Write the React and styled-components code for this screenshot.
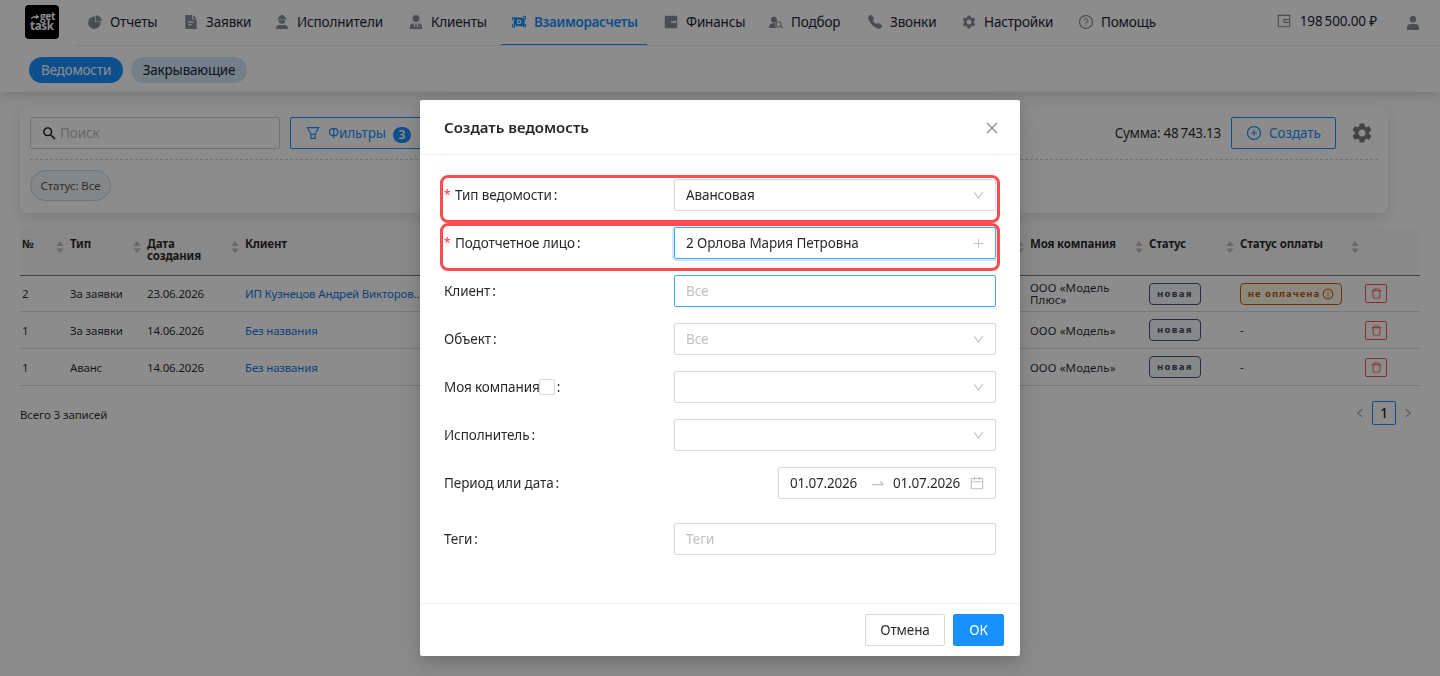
import React from "react";
import styled, { createGlobalStyle, css } from "styled-components";
import {
    AiFillPieChart,
    AiFillWallet,
    AiOutlineCalendar,
    AiOutlineClose,
    AiOutlineDelete,
    AiOutlineDown,
    AiOutlineInfoCircle,
    AiOutlineLeft,
    AiOutlinePlus,
    AiOutlinePlusCircle,
    AiOutlineQuestionCircle,
    AiOutlineRight,
    AiOutlineSwapRight,
    AiOutlineWallet,
} from "react-icons/ai";
import { BsTelephoneFill } from "react-icons/bs";
import { MdSearch, MdSettings } from "react-icons/md";

const GlobalStyle = createGlobalStyle`
    * {
        box-sizing: border-box;
    }

    body {
        margin: 0;
        height: 676px;
        overflow: hidden;
        background: #ffffff;
        color: rgba(0, 0, 0, 0.85);
        font-family: "Noto Sans", "Open Sans", sans-serif;
        font-size: 13.5px;
        line-height: 22px;
        letter-spacing: -0.1px;
    }
`;

/* ---------- icons ---------- */

const DocIcon = () => (
    <svg viewBox="-1 -1 16 16" fill="currentColor">
        <path
            fillRule="evenodd"
            d="M1.2 0H8v4.300h4.600V14H1.200zM4 6.600v1.100h5.800v-1.100zM4 9.200v1.100h3.800v-1.100z"
        />
        <path d="M9 0l3.600 3.400H9z" />
    </svg>
);

const WorkerIcon = () => (
    <svg viewBox="-1 -1 16 16" fill="currentColor">
        <path d="M3.200 3.600C3.300 1.900 4.400.9 5.800.7V0h2.400v.7c1.400.2 2.500 1.200 2.600 2.900h.7v1h-9v-1z" />
        <path d="M3.600 5.300h6.800a3.400 3.400 0 0 1-6.800 0z" />
        <path d="M1 14c0-2.900 1.300-4 3.400-4h5.200c2.100 0 3.400 1.100 3.400 4z" />
    </svg>
);

const ClientIcon = () => (
    <svg viewBox="-1 -1 16 16" fill="currentColor">
        <circle cx="7" cy="3.5" r="3.5" />
        <path
            fillRule="evenodd"
            d="M1 14v-2.100c0-2.200 1.300-3.400 3.200-3.600L5.600 13l.8-3-.6-1.600h2.400L7.600 10l.8 3 1.400-4.700c1.900.2 3.200 1.400 3.200 3.600V14zM9.600 11.400v.8h1.900v-.8z"
        />
    </svg>
);

const MoneyIcon = () => (
    <svg viewBox="-1 -1 16 16" fill="currentColor">
        <path
            fillRule="evenodd"
            d="M1.800 2.600h8.700v1h1V3h1.200v8.200H4.200v-.9h-1v.9H1.800zM7 4.600a2.300 2.300 0 1 0 0 4.600 2.300 2.300 0 0 0 0-4.600z"
        />
        <circle cx="7" cy="6.9" r="1.1" />
        <path d="M0 2.300h3v1H1v2H0zM10.800 1.400l1.200-1.400v.9h2v3.300h-1V1.900h-1v.9zM0 9h1v2.400h1v-.9l1.400 1.400L2 13.300v-.9H0zM11 11.300h2V9h1v3.300h-3z" />
    </svg>
);

const PickIcon = () => (
    <svg viewBox="-1 -1 16 16" fill="currentColor">
        <circle cx="4.9" cy="4.7" r="3" />
        <path d="M0 13c0-3.200 1.400-4.800 3.800-4.800h2.900a3.700 3.700 0 0 0 1.300 4.800z" />
        <g fill="none" stroke="currentColor" strokeWidth="1.1">
            <circle cx="9.6" cy="9.2" r="2.5" />
            <path d="M11.400 11l2.300 2.300" />
        </g>
    </svg>
);

const UserIcon = () => (
    <svg viewBox="-1 -1 16 16" fill="currentColor">
        <circle cx="7" cy="3.3" r="3.2" />
        <path d="M1 14v-2.600C1 9.100 2.600 8 4.600 8h4.800c2 0 3.600 1.100 3.600 3.400V14z" />
    </svg>
);

const FunnelIcon = () => (
    <svg
        viewBox="-1 -1 16 16"
        fill="none"
        stroke="currentColor"
        strokeWidth="1.1"
    >
        <path d="M1.300 1.600h11.400L9.200 7.800v4.600H4.800V7.800z" />
        <path d="M4.800 8.300h4.400" />
    </svg>
);

const LogoArrow = () => (
    <svg width="10" height="6" viewBox="0 0 10 6" fill="#fff">
        <path d="M.5 5.500C.7 3.300 2.500 2 6 2V.4L9.500 3 6 5.300V3.700C3.500 3.600 1.700 4 .5 5.500z" />
    </svg>
);

/* ---------- header ---------- */

const Header = styled.header`
    height: 92px;
    background: #ffffff;
    box-shadow: 0 2px 12px rgba(0, 0, 0, 0.2);
`;

const TopBar = styled.div`
    display: flex;
    height: 46px;
    padding-left: 25px;
`;

const Logo = styled.div`
    display: flex;
    flex-direction: column;
    width: 34px;
    height: 34px;
    margin: 5px 18px 0 0;
    padding: 7px 0 0 5px;
    border-radius: 4px;
    background: #000000;
    color: #ffffff;
    font: 700 10px/9px "Open Sans", sans-serif;
    letter-spacing: -0.3px;

    span {
        display: flex;
        align-items: center;
        height: 9px;
    }

    span + span {
        font-size: 11.5px;
        height: 8px;
    }
`;

const NavBar = styled.nav`
    display: flex;
    flex: 1;
    gap: 6px;
    margin-left: -2px;
    padding-left: 2px;
    border-bottom: 1px solid #e6e9ee;
`;

const NavItem = styled.a`
    display: flex;
    align-items: center;
    gap: 7px;
    width: ${({ $w }) => $w}px;
    height: 45px;
    padding: 0 0 1px 10px;
    color: #1b2436;
    white-space: nowrap;
    letter-spacing: -0.15px;

    svg {
        flex: none;
        width: 16px;
        height: 16px;
        color: #888e99;
    }

    ${({ $active }) =>
        $active &&
        css`
            padding-bottom: 0;
            border-bottom: 1px solid #1890ff;
            color: #1890ff;
            font-weight: 600;
            letter-spacing: -0.35px;

            svg {
                color: #1890ff;
            }
        `}
`;

const PhoneIcon = styled(BsTelephoneFill)`
    padding: 1px;
`;

const Account = styled.div`
    display: flex;
    align-items: center;
    height: 42px;
    margin: 0 27px 0 auto;
    color: #1b2436;
    letter-spacing: -0.15px;
    white-space: nowrap;

    svg {
        width: 16px;
        height: 16px;
        margin-right: 8px;
        color: #888e99;
    }

    svg:last-child {
        margin: 4px -8px 0 28px;
    }
`;

const SubNav = styled.div`
    display: flex;
    gap: 8px;
    height: 46px;
    margin: 0 25px;
    padding: 11px 0 0 4px;
    border-bottom: 1px solid #f0f0f0;
`;

const Pill = styled.a`
    width: ${({ $w }) => $w}px;
    height: 26px;
    border-radius: 13px;
    background: ${({ $active }) => ($active ? "#1890ff" : "#d4e7fb")};
    color: ${({ $active }) => ($active ? "#ffffff" : "#1b2436")};
    letter-spacing: -0.2px;
    line-height: 26px;
    text-align: center;
    white-space: nowrap;
`;

/* ---------- filters ---------- */

const FilterCard = styled.section`
    width: 1368px;
    height: 106px;
    margin: 15px 0 0 20px;
    padding: 10px;
    border-radius: 8px;
    background: #ffffff;
    box-shadow: 0 4px 14px rgba(0, 0, 0, 0.12);
`;

const FilterRow = styled.div`
    display: flex;
    align-items: center;
    height: 43px;
    padding-bottom: 10px;
    border-bottom: 1px dashed #d0d0d0;
`;

const SearchBox = styled.div`
    display: flex;
    align-items: center;
    gap: 2px;
    width: 250px;
    height: 32px;
    margin-right: 10px;
    padding: 0 10px;
    border: 1px solid #d0d0d0;
    border-radius: 2px;
    color: #bfbfbf;

    svg {
        width: 17px;
        height: 17px;
        color: #111111;
    }
`;

const OutlineButton = styled.button`
    display: flex;
    align-items: center;
    gap: 7px;
    width: ${({ $w }) => $w}px;
    height: 32px;
    padding: 0 14px;
    border: 1px solid #1890ff;
    border-radius: 2px;
    background: #ffffff;
    color: #1890ff;
    font: inherit;
    letter-spacing: inherit;
    white-space: nowrap;

    svg {
        flex: none;
        width: 16px;
        height: 16px;
    }
`;

const Badge = styled.span`
    width: 18px;
    height: 16px;
    margin-top: 3px;
    border-radius: 8px;
    background: #1890ff;
    color: #ffffff;
    font-size: 12px;
    font-weight: 600;
    line-height: 16px;
    text-align: center;
`;

const Sum = styled.span`
    margin: 0 10px 0 auto;
    letter-spacing: -0.28px;
    white-space: nowrap;
`;

const GearButton = styled.span`
    display: flex;
    margin: 0 4px 0 14px;
    color: #7d7d7d;

    svg {
        width: 24px;
        height: 24px;
    }
`;

const FilterTag = styled.span`
    display: inline-block;
    width: 81px;
    height: 31px;
    margin-top: 10px;
    border: 1px solid #c8d2e4;
    border-radius: 16px;
    background: #f0f6fc;
    color: #555555;
    font-size: 11.5px;
    line-height: 30px;
    text-align: center;
`;

/* ---------- table ---------- */

const Table = styled.div`
    width: 1400px;
    margin: 16px 0 0 20px;
    font-size: 11.5px;
    line-height: 12px;
    letter-spacing: -0.18px;
`;

const Row = styled.div`
    display: grid;
    grid-template-columns: 48px 77px 98px 785px 119px 91px 125px 57px;
    align-items: center;
    height: ${({ $h }) => $h}px;
    border-bottom: 1px solid #d9dce1;
`;

const HeadRow = styled(Row)`
    align-items: start;
    height: 47px;
    background: #fafafa;
    border-bottom: 1px solid #777777;
    font-weight: 700;
`;

const HeadCell = styled.div`
    display: flex;
    justify-content: space-between;
    padding: 9px 4px 0 2px;

    span {
        max-width: 100px;
    }
`;

const Sorter = styled.svg`
    flex: none;
    width: 8px;
    height: 14px;
    margin-top: 2px;
    fill: #bfbfbf;
`;

const Cell = styled.div`
    padding: ${({ $flush }) => ($flush ? "0 0 0 2px" : "1px 0 0 2px")};
    white-space: nowrap;
`;

const CompanyCell = styled(Cell)`
    padding-right: 20px;
    letter-spacing: 0.1px;
    white-space: normal;
`;

const Link = styled.a`
    color: #1677e8;
`;

const StatusTag = styled.span`
    display: inline-flex;
    align-items: center;
    justify-content: center;
    gap: 2px;
    width: ${({ $w }) => $w}px;
    height: 22px;
    border: 1px solid ${({ $warn }) => ($warn ? "#c05f08" : "#4a566e")};
    border-radius: 4px;
    background: ${({ $warn }) => ($warn ? "#fff7e6" : "#f5f8fc")};
    color: ${({ $warn }) => ($warn ? "#b85a08" : "#3b475c")};
    font-size: 9.5px;
    font-weight: 700;
    letter-spacing: ${({ $warn }) => ($warn ? 1 : 1.35)}px;
    vertical-align: top;

    svg {
        flex: none;
        width: 12px;
        height: 12px;
    }
`;

const DeleteButton = styled.span`
    display: flex;
    align-items: center;
    justify-content: center;
    width: 22px;
    height: 19px;
    border: 1px solid #ff4d4f;
    border-radius: 2px;
    color: #ff4d4f;

    svg {
        width: 13px;
        height: 13px;
    }
`;

const TableFooter = styled.div`
    display: flex;
    justify-content: space-between;
    width: 1400px;
    margin: 15px 0 0 20px;
    font-size: 11.5px;
    line-height: 28px;
`;

const Pagination = styled.div`
    display: flex;
    align-items: center;
    gap: 6px;
    height: 24px;
    padding-right: 6px;
    color: #999999;

    svg {
        width: 12px;
        height: 12px;
    }

    b {
        width: 24px;
        height: 24px;
        border: 1px solid #1890ff;
        border-radius: 2px;
        color: #222222;
        font-size: 13.5px;
        font-weight: 500;
        line-height: 23px;
        text-align: center;
    }
`;

/* ---------- modal ---------- */

const Overlay = styled.div`
    position: fixed;
    inset: 0;
    display: flex;
    align-items: flex-start;
    justify-content: center;
    padding-top: 100px;
    background: rgba(0, 0, 0, 0.45);
`;

const Dialog = styled.div`
    display: flex;
    flex-direction: column;
    width: 600px;
    height: 556px;
    border-radius: 2px;
    background: #ffffff;
    box-shadow: 0 6px 16px rgba(0, 0, 0, 0.16), 0 9px 28px 8px rgba(0, 0, 0, 0.06);
`;

const DialogHeader = styled.div`
    display: flex;
    align-items: center;
    justify-content: space-between;
    height: 55px;
    padding: 0 20px 0 24px;
    border-bottom: 1px solid #f0f0f0;
    font-size: 15px;
    font-weight: 600;
    letter-spacing: 0;

    svg {
        width: 16px;
        height: 16px;
        margin-top: 2px;
        color: #8c8c8c;
    }
`;

const DialogBody = styled.div`
    flex: 1;
    padding: 24px;
`;

const Field = styled.div`
    position: relative;
    display: flex;
    align-items: center;
    justify-content: space-between;
    height: 32px;
    margin-bottom: ${({ $gap }) => $gap || 16}px;
`;

const Highlight = styled.div`
    position: absolute;
    top: -4px;
    right: -4px;
    left: -4px;
    height: 48px;
    border: 3px solid #ff4d4f;
    border-radius: 8px;
`;

const FieldLabel = styled.label`
    display: flex;
    align-items: center;
    white-space: nowrap;

    &::after {
        content: ":";
        margin-left: 2px;
    }
`;

const Star = styled.span`
    width: 11px;
    color: #ff4d4f;
    font-size: 12px;
    font-weight: 600;
`;

const Checkbox = styled.span`
    width: 16px;
    height: 16px;
    margin-left: -1px;
    border: 1px solid #d9d9d9;
    border-radius: 2px;
`;

const Control = styled.div`
    display: flex;
    align-items: center;
    justify-content: space-between;
    width: ${({ $w }) => $w || 322}px;
    height: 32px;
    padding: 0 10px 0 11px;
    border: 1px solid ${({ $blue }) => ($blue ? "#40a9ff" : "#d9d9d9")};
    border-radius: 2px;
    box-shadow: ${({ $focus }) =>
        $focus ? "0 0 0 2px rgba(24, 144, 255, 0.2)" : "none"};
    color: ${({ $muted }) => ($muted ? "#bfbfbf" : "rgba(0, 0, 0, 0.85)")};
    white-space: nowrap;

    svg {
        width: 13px;
        height: 13px;
        color: #bfbfbf;
    }
`;

const RangeControl = styled(Control)`
    letter-spacing: -0.2px;

    svg {
        width: 16px;
        height: 16px;
    }

    svg:first-of-type {
        margin: 0 -2px 0 4px;
    }
`;

const DialogFooter = styled.div`
    display: flex;
    justify-content: flex-end;
    gap: 8px;
    height: 53px;
    padding: 10px 16px;
    border-top: 1px solid #f0f0f0;
`;

const DialogButton = styled.button`
    width: ${({ $w }) => $w}px;
    height: 32px;
    padding: 0;
    border: 1px solid ${({ $primary }) => ($primary ? "#1890ff" : "#d9d9d9")};
    border-radius: 2px;
    background: ${({ $primary }) => ($primary ? "#1890ff" : "#ffffff")};
    color: ${({ $primary }) => ($primary ? "#ffffff" : "rgba(0, 0, 0, 0.85)")};
    font: inherit;
    letter-spacing: inherit;
`;

const nav = [
    { label: "Отчеты", icon: AiFillPieChart, w: 90 },
    { label: "Заявки", icon: DocIcon, w: 85 },
    { label: "Исполнители", icon: WorkerIcon, w: 128 },
    { label: "Клиенты", icon: ClientIcon, w: 97 },
    { label: "Взаиморасчеты", icon: MoneyIcon, w: 146, active: true },
    { label: "Финансы", icon: AiFillWallet, w: 99 },
    { label: "Подбор", icon: PickIcon, w: 93 },
    { label: "Звонки", icon: PhoneIcon, w: 88 },
    { label: "Настройки", icon: MdSettings, w: 111 },
    { label: "Помощь", icon: AiOutlineQuestionCircle, w: 97 },
];

const columns = [
    "№",
    "Тип",
    "Дата создания",
    "Клиент",
    "Моя компания",
    "Статус",
    "Статус оплаты",
];

const rows = [
    {
        num: "2",
        type: "За заявки",
        date: "23.06.2026",
        client: "ИП Кузнецов Андрей Викторов...",
        company: "ООО «Модель Плюс»",
        unpaid: true,
        h: 36,
    },
    {
        num: "1",
        type: "За заявки",
        date: "14.06.2026",
        client: "Без названия",
        company: "ООО «Модель»",
        h: 37,
    },
    {
        num: "1",
        type: "Аванс",
        date: "14.06.2026",
        client: "Без названия",
        company: "ООО «Модель»",
        h: 37,
    },
];

const SortIcon = () => (
    <Sorter viewBox="0 0 8 14">
        <path d="M4 1l3.800 5H.2zM4 13L.2 8.500h7.600z" />
    </Sorter>
);

const TableRow = ({ row }) => (
    <Row $h={row.h}>
        <Cell>{row.num}</Cell>
        <Cell>{row.type}</Cell>
        <Cell>{row.date}</Cell>
        <Cell>
            <Link>{row.client}</Link>
        </Cell>
        <CompanyCell>{row.company}</CompanyCell>
        <Cell $flush>
            <StatusTag $w={52}>новая</StatusTag>
        </Cell>
        <Cell $flush>
            {row.unpaid ? (
                <StatusTag $w={102} $warn>
                    не оплачена
                    <AiOutlineInfoCircle />
                </StatusTag>
            ) : (
                "-"
            )}
        </Cell>
        <Cell $flush>
            <DeleteButton>
                <AiOutlineDelete />
            </DeleteButton>
        </Cell>
    </Row>
);

const FormField = ({ label, required, checkbox, gap, children }) => (
    <Field $gap={gap}>
        <FieldLabel>
            {required && <Star>*</Star>}
            {label}
            {checkbox && <Checkbox />}
        </FieldLabel>
        {children}
        {required && <Highlight />}
    </Field>
);

const CreateDialog = () => (
    <Overlay>
        <Dialog>
            <DialogHeader>
                Создать ведомость
                <AiOutlineClose />
            </DialogHeader>
            <DialogBody>
                <FormField label="Тип ведомости" required>
                    <Control>
                        Авансовая
                        <AiOutlineDown />
                    </Control>
                </FormField>
                <FormField label="Подотчетное лицо" required>
                    <Control $blue $focus>
                        2 Орлова Мария Петровна
                        <AiOutlinePlus />
                    </Control>
                </FormField>
                <FormField label="Клиент">
                    <Control $blue $muted>
                        Все
                    </Control>
                </FormField>
                <FormField label="Объект">
                    <Control $muted>
                        Все
                        <AiOutlineDown />
                    </Control>
                </FormField>
                <FormField label="Моя компания" checkbox>
                    <Control>
                        <span />
                        <AiOutlineDown />
                    </Control>
                </FormField>
                <FormField label="Исполнитель">
                    <Control>
                        <span />
                        <AiOutlineDown />
                    </Control>
                </FormField>
                <FormField label="Период или дата" gap={24}>
                    <RangeControl $w={218}>
                        01.07.2026
                        <AiOutlineSwapRight />
                        01.07.2026
                        <AiOutlineCalendar />
                    </RangeControl>
                </FormField>
                <FormField label="Теги">
                    <Control $muted>Теги</Control>
                </FormField>
            </DialogBody>
            <DialogFooter>
                <DialogButton $w={80}>Отмена</DialogButton>
                <DialogButton $w={51} $primary>
                    ОК
                </DialogButton>
            </DialogFooter>
        </Dialog>
    </Overlay>
);

export default function App() {
    return (
        <>
            <GlobalStyle />
            <Header>
                <TopBar>
                    <Logo>
                        <span>
                            <LogoArrow />
                            get
                        </span>
                        <span>task</span>
                    </Logo>
                    <NavBar>
                        {nav.map(({ label, icon: Icon, w, active }) => (
                            <NavItem key={label} $w={w} $active={active}>
                                <Icon />
                                {label}
                            </NavItem>
                        ))}
                        <Account>
                            <AiOutlineWallet />
                            198&#8201;500.00 ₽
                            <UserIcon />
                        </Account>
                    </NavBar>
                </TopBar>
                <SubNav>
                    <Pill $w={94} $active>
                        Ведомости
                    </Pill>
                    <Pill $w={116}>Закрывающие</Pill>
                </SubNav>
            </Header>
            <FilterCard>
                <FilterRow>
                    <SearchBox>
                        <MdSearch />
                        Поиск
                    </SearchBox>
                    <OutlineButton $w={140}>
                        <FunnelIcon />
                        Фильтры
                        <Badge>3</Badge>
                    </OutlineButton>
                    <Sum>Сумма: 48&#8201;743.13</Sum>
                    <OutlineButton $w={105}>
                        <AiOutlinePlusCircle />
                        Создать
                    </OutlineButton>
                    <GearButton>
                        <MdSettings />
                    </GearButton>
                </FilterRow>
                <FilterTag>Статус: Все</FilterTag>
            </FilterCard>
            <Table>
                <HeadRow>
                    {columns.map((title) => (
                        <HeadCell key={title}>
                            <span>{title}</span>
                            <SortIcon />
                        </HeadCell>
                    ))}
                </HeadRow>
                {rows.map((row, i) => (
                    <TableRow key={i} row={row} />
                ))}
            </Table>
            <TableFooter>
                <span>Всего 3 записей</span>
                <Pagination>
                    <AiOutlineLeft />
                    <b>1</b>
                    <AiOutlineRight />
                </Pagination>
            </TableFooter>
            <CreateDialog />
        </>
    );
}
